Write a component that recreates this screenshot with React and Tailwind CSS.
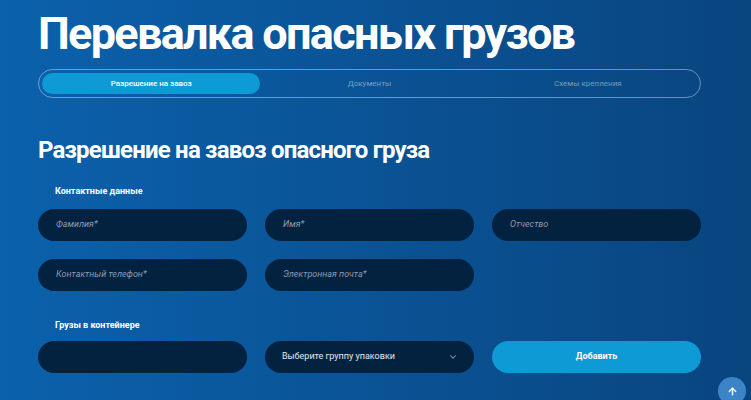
import { ChevronDown, ArrowUp } from 'lucide-react';

const tabs = ['Разрешение на завоз', 'Документы', 'Схемы крепления'];

function Field({ placeholder }) {
  return (
    <div className="h-[32px] rounded-full bg-[#02223f] flex items-center px-[18px]">
      <span className="text-[9px] italic text-[#8b9cb3]">{placeholder}</span>
    </div>
  );
}

export default function App() {
  return (
    <div
      className="w-[751px] h-[400px] overflow-hidden relative bg-gradient-to-r from-[#0b61ac] to-[#09457f] text-white"
      style={{ fontFamily: 'Roboto, "Noto Sans", sans-serif' }}
    >
      <div className="w-[663px] ml-[38px]">
        <h1 className="text-[45px] font-bold leading-none pt-[11px] tracking-[-1.7px]">
          Перевалка опасных грузов
        </h1>

        {/* tabs */}
        <div className="mt-[13px] h-[29px] rounded-full border border-white/40 p-[3px] grid grid-cols-3">
          {tabs.map((t, i) => (
            <div
              key={t}
              className={
                i === 0
                  ? 'rounded-full bg-[#0d9ad5] flex items-center justify-center text-[8px] font-medium text-white'
                  : 'rounded-full flex items-center justify-center text-[8px] text-white/45'
              }
            >
              {t}
            </div>
          ))}
        </div>

        <h2 className="mt-[40px] text-[24px] font-bold leading-none tracking-[-0.8px]">
          Разрешение на завоз опасного груза
        </h2>

        <div className="mt-[23px] pl-[17px] text-[9px] font-bold">Контактные данные</div>

        <div className="mt-[10px] grid grid-cols-3 gap-x-[18px] gap-y-[18px]">
          <Field placeholder="Фамилия*" />
          <Field placeholder="Имя*" />
          <Field placeholder="Отчество" />
          <Field placeholder="Контактный телефон*" />
          <Field placeholder="Электронная почта*" />
        </div>

        <div className="mt-[28px] pl-[17px] text-[9px] font-bold">Грузы в контейнере</div>

        <div className="mt-[9px] grid grid-cols-3 gap-x-[18px]">
          <div className="h-[32px] rounded-full bg-[#02223f]" />
          <div className="h-[32px] rounded-full bg-[#02223f] flex items-center justify-between pl-[17px] pr-[16px]">
            <span className="text-[9px] text-white/90">Выберите группу упаковки</span>
            <ChevronDown className="w-[10px] h-[10px] text-[#8b9cb3]" strokeWidth={2.5} />
          </div>
          <button className="h-[32px] rounded-full bg-[#0d9ad5] text-[9px] font-bold text-white">
            Добавить
          </button>
        </div>
      </div>

      <div className="absolute left-[718px] top-[377px] w-[28px] h-[28px] rounded-full bg-[#3d84c6] flex items-center justify-center">
        <ArrowUp className="w-[11px] h-[11px] text-white" strokeWidth={3} />
      </div>
    </div>
  );
}
